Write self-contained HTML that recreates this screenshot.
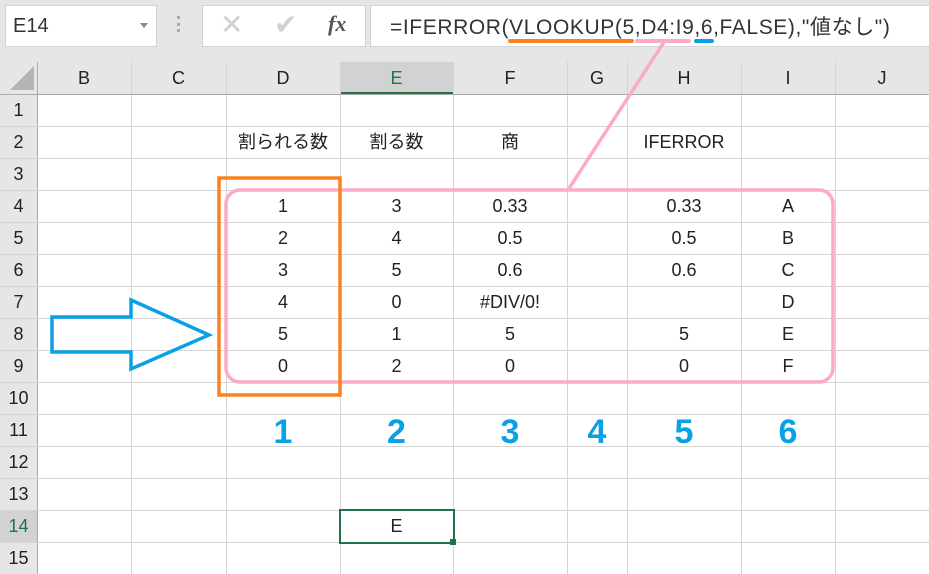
<!DOCTYPE html>
<html><head><meta charset="utf-8"><style>
*{margin:0;padding:0;box-sizing:border-box}
body{width:929px;height:574px;overflow:hidden;background:#fff;position:relative;font-family:"Liberation Sans","Noto Sans CJK JP",sans-serif;color:#222}
.t{position:absolute;height:32px;line-height:32px;text-align:center;font-size:18px}
.h{position:absolute;text-align:center;font-size:18px;color:#222}
.b{position:absolute;font-size:34px;font-weight:bold;color:#0aa0e6;text-align:center;height:32px;line-height:32px}
</style></head><body>
<div style="position:absolute;left:0;top:0;width:929px;height:62px;background:#e6e6e6"></div>
<div style="position:absolute;left:5px;top:5px;width:152px;height:42px;background:#fff;border:1px solid #d4d4d4;font-size:20px;line-height:40px;padding-left:7px;color:#333">E14</div>
<div style="position:absolute;left:140px;top:23px;border-left:4px solid transparent;border-right:4px solid transparent;border-top:5px solid #888"></div>
<div style="position:absolute;left:177px;top:16px;width:3px;height:16px;border-left:3px dotted #aaa"></div>
<div style="position:absolute;left:202px;top:5px;width:164px;height:42px;background:#fff;border:1px solid #d4d4d4"></div>
<div style="position:absolute;left:220px;top:8px;font-size:28px;color:#d0d0d0">✕</div>
<div style="position:absolute;left:274px;top:8px;font-size:28px;color:#d0d0d0">✔</div>
<div style="position:absolute;left:328px;top:11px;font-size:22px;color:#555;font-family:'Liberation Serif',serif;font-style:italic;font-weight:bold">fx</div>
<div style="position:absolute;left:370px;top:5px;width:565px;height:42px;background:#fff;border:1px solid #d4d4d4"></div>
<div style="position:absolute;left:390px;top:11px;font-size:21px;color:#333;white-space:nowrap;letter-spacing:0.6px">=IFERROR(VLOOKUP(5,D4:I9,6,FALSE),"値なし")</div>
<div style="position:absolute;left:0;top:62px;width:929px;height:32px;background:#e6e6e6"></div>
<div style="position:absolute;left:0;top:94px;width:37px;height:480px;background:#e6e6e6"></div>
<div style="position:absolute;left:340px;top:62px;width:113px;height:32px;background:#d2d2d2;border-bottom:2px solid #217346"></div>
<div style="position:absolute;left:0;top:510px;width:37px;height:32px;background:#d2d2d2"></div>
<svg width="929" height="574" style="position:absolute;left:0;top:0">
<polygon points="34,66 34,90 10,90" fill="#b4b4b4"/>
<g stroke="#d4d4d4" stroke-width="1">
<line x1="37.5" y1="62" x2="37.5" y2="574" stroke="#aaa"/>
<line x1="131.5" y1="62" x2="131.5" y2="574"/><line x1="226.5" y1="62" x2="226.5" y2="574"/>
<line x1="340.5" y1="62" x2="340.5" y2="574"/><line x1="453.5" y1="62" x2="453.5" y2="574"/>
<line x1="567.5" y1="62" x2="567.5" y2="574"/><line x1="627.5" y1="62" x2="627.5" y2="574"/>
<line x1="741.5" y1="62" x2="741.5" y2="574"/><line x1="835.5" y1="62" x2="835.5" y2="574"/>
<line x1="0" y1="94.5" x2="929" y2="94.5" stroke="#aaa"/>
<line x1="0" y1="126.5" x2="929" y2="126.5"/><line x1="0" y1="158.5" x2="929" y2="158.5"/>
<line x1="0" y1="190.5" x2="929" y2="190.5"/><line x1="0" y1="222.5" x2="929" y2="222.5"/>
<line x1="0" y1="254.5" x2="929" y2="254.5"/><line x1="0" y1="286.5" x2="929" y2="286.5"/>
<line x1="0" y1="318.5" x2="929" y2="318.5"/><line x1="0" y1="350.5" x2="929" y2="350.5"/>
<line x1="0" y1="382.5" x2="929" y2="382.5"/><line x1="0" y1="414.5" x2="929" y2="414.5"/>
<line x1="0" y1="446.5" x2="929" y2="446.5"/><line x1="0" y1="478.5" x2="929" y2="478.5"/>
<line x1="0" y1="510.5" x2="929" y2="510.5"/><line x1="0" y1="542.5" x2="929" y2="542.5"/>
</g>
<rect x="340" y="510" width="114" height="33" fill="none" stroke="#217346" stroke-width="2"/>
<rect x="450" y="539" width="6" height="6" fill="#217346"/>
<line x1="510" y1="41" x2="632" y2="41" stroke="#f7821f" stroke-width="4" stroke-linecap="round"/>
<line x1="637" y1="41" x2="689" y2="41" stroke="#fbaac8" stroke-width="4" stroke-linecap="round"/>
<line x1="696" y1="41" x2="712" y2="41" stroke="#0aa0e6" stroke-width="4" stroke-linecap="round"/>
<line x1="664" y1="42" x2="568" y2="190" stroke="#fbaac8" stroke-width="3.5"/>
<rect x="226" y="190" width="607" height="192" rx="14" fill="none" stroke="#fbaac8" stroke-width="3.5"/>
<rect x="219" y="178" width="121" height="217" fill="none" stroke="#f7821f" stroke-width="3.5"/>
<polygon points="52,317 131,317 131,300 209,335 131,369 131,352 52,352" fill="none" stroke="#0aa0e6" stroke-width="3.5" stroke-linejoin="miter"/>
</svg>
<div class="h" style="left:37px;top:62px;width:94px;line-height:32px">B</div>
<div class="h" style="left:131px;top:62px;width:95px;line-height:32px">C</div>
<div class="h" style="left:226px;top:62px;width:114px;line-height:32px">D</div>
<div class="h" style="left:340px;top:62px;width:113px;line-height:32px;color:#217346">E</div>
<div class="h" style="left:453px;top:62px;width:114px;line-height:32px">F</div>
<div class="h" style="left:567px;top:62px;width:60px;line-height:32px">G</div>
<div class="h" style="left:627px;top:62px;width:114px;line-height:32px">H</div>
<div class="h" style="left:741px;top:62px;width:94px;line-height:32px">I</div>
<div class="h" style="left:835px;top:62px;width:94px;line-height:32px">J</div>
<div class="h" style="left:0;top:94px;width:37px;line-height:32px;font-size:18px">1</div>
<div class="h" style="left:0;top:126px;width:37px;line-height:32px">2</div>
<div class="h" style="left:0;top:158px;width:37px;line-height:32px">3</div>
<div class="h" style="left:0;top:190px;width:37px;line-height:32px">4</div>
<div class="h" style="left:0;top:222px;width:37px;line-height:32px">5</div>
<div class="h" style="left:0;top:254px;width:37px;line-height:32px">6</div>
<div class="h" style="left:0;top:286px;width:37px;line-height:32px">7</div>
<div class="h" style="left:0;top:318px;width:37px;line-height:32px">8</div>
<div class="h" style="left:0;top:350px;width:37px;line-height:32px">9</div>
<div class="h" style="left:0;top:382px;width:37px;line-height:32px">10</div>
<div class="h" style="left:0;top:414px;width:37px;line-height:32px">11</div>
<div class="h" style="left:0;top:446px;width:37px;line-height:32px">12</div>
<div class="h" style="left:0;top:478px;width:37px;line-height:32px">13</div>
<div class="h" style="left:0;top:510px;width:37px;line-height:32px;color:#217346">14</div>
<div class="h" style="left:0;top:542px;width:37px;line-height:32px">15</div>
<div class="t" style="left:226px;top:126px;width:114px">割られる数</div>
<div class="t" style="left:340px;top:126px;width:113px">割る数</div>
<div class="t" style="left:453px;top:126px;width:114px">商</div>
<div class="t" style="left:627px;top:126px;width:114px">IFERROR</div>
<div class="t" style="left:226px;top:190px;width:114px">1</div><div class="t" style="left:340px;top:190px;width:113px">3</div><div class="t" style="left:453px;top:190px;width:114px">0.33</div><div class="t" style="left:627px;top:190px;width:114px">0.33</div><div class="t" style="left:741px;top:190px;width:94px">A</div>
<div class="t" style="left:226px;top:222px;width:114px">2</div><div class="t" style="left:340px;top:222px;width:113px">4</div><div class="t" style="left:453px;top:222px;width:114px">0.5</div><div class="t" style="left:627px;top:222px;width:114px">0.5</div><div class="t" style="left:741px;top:222px;width:94px">B</div>
<div class="t" style="left:226px;top:254px;width:114px">3</div><div class="t" style="left:340px;top:254px;width:113px">5</div><div class="t" style="left:453px;top:254px;width:114px">0.6</div><div class="t" style="left:627px;top:254px;width:114px">0.6</div><div class="t" style="left:741px;top:254px;width:94px">C</div>
<div class="t" style="left:226px;top:286px;width:114px">4</div><div class="t" style="left:340px;top:286px;width:113px">0</div><div class="t" style="left:453px;top:286px;width:114px">#DIV/0!</div><div class="t" style="left:741px;top:286px;width:94px">D</div>
<div class="t" style="left:226px;top:318px;width:114px">5</div><div class="t" style="left:340px;top:318px;width:113px">1</div><div class="t" style="left:453px;top:318px;width:114px">5</div><div class="t" style="left:627px;top:318px;width:114px">5</div><div class="t" style="left:741px;top:318px;width:94px">E</div>
<div class="t" style="left:226px;top:350px;width:114px">0</div><div class="t" style="left:340px;top:350px;width:113px">2</div><div class="t" style="left:453px;top:350px;width:114px">0</div><div class="t" style="left:627px;top:350px;width:114px">0</div><div class="t" style="left:741px;top:350px;width:94px">F</div>
<div class="b" style="left:226px;top:416px;width:114px">1</div>
<div class="b" style="left:340px;top:416px;width:113px">2</div>
<div class="b" style="left:453px;top:416px;width:114px">3</div>
<div class="b" style="left:567px;top:416px;width:60px">4</div>
<div class="b" style="left:627px;top:416px;width:114px">5</div>
<div class="b" style="left:741px;top:416px;width:94px">6</div>
<div class="t" style="left:340px;top:510px;width:113px">E</div>
</body></html>
